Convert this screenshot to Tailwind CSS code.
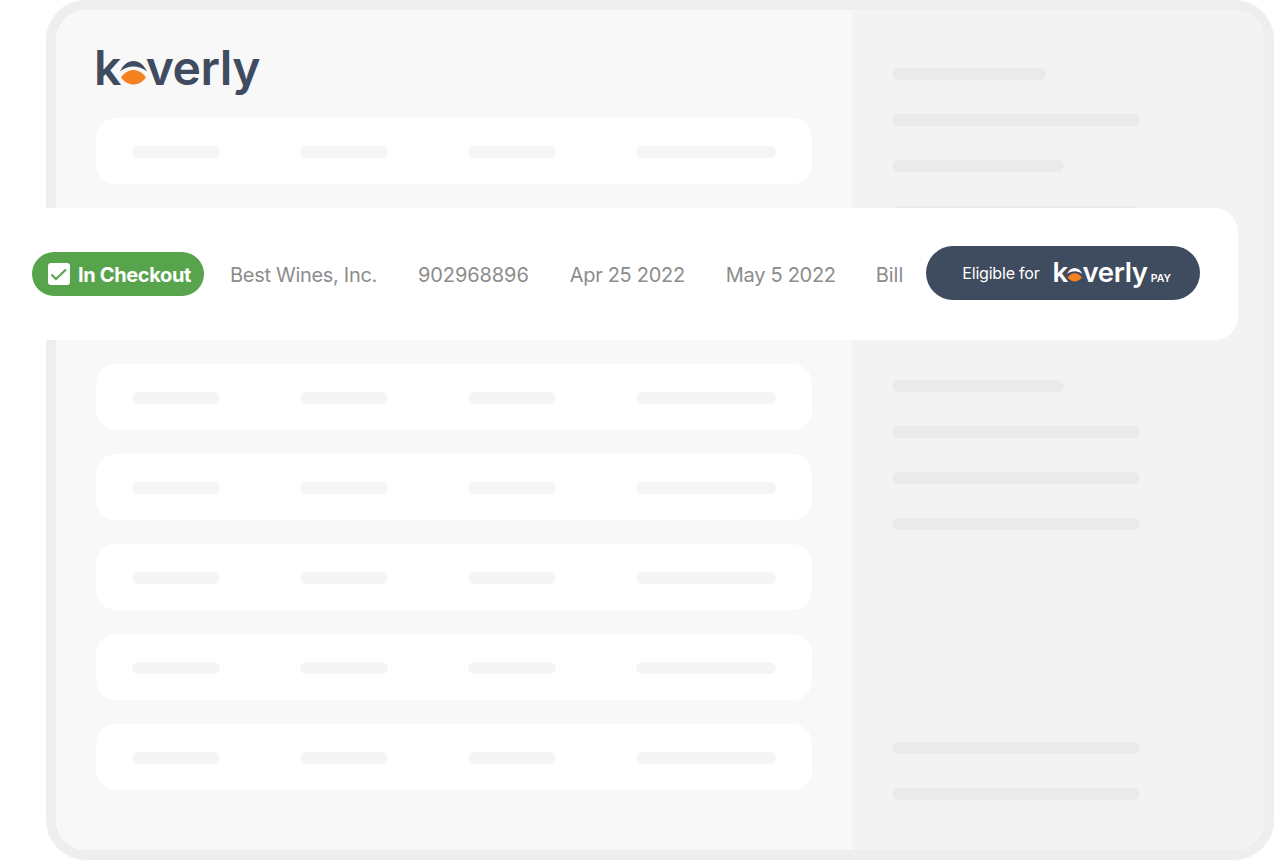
<!DOCTYPE html>
<html lang="en">

<head>
    <meta charset="UTF-8">
    <title>Koverly</title>
    <script src="https://cdn.jsdelivr.net/npm/@tailwindcss/browser@4"></script>
</head>

<body class="bg-white w-[1274px] h-[860px] overflow-hidden relative font-['Inter',sans-serif]">

    <!-- dashboard frame -->
    <div class="ml-[46px] w-[1228px] h-[860px] border-[10px] border-[#eeeeee] rounded-[40px] overflow-hidden flex">

        <!-- table side -->
        <div class="w-[796px] h-full bg-[#f8f8f8] px-10 pt-10">
            <div class="h-[44px] flex items-baseline ml-[-2px] mt-[-4px] mb-[28px] text-[#3f4b5e] text-[48px] leading-[44px] font-semibold tracking-[-0.5px]">
                <span>k</span>
                <svg class="w-[27px] h-[24px] mx-[-1px] shrink-0" viewBox="0 0 27 24">
                    <path d="M0 10.5C3 4 8 0 13.5 0C19 0 24 4 27 10.5C23 7 18 5.5 13.5 5.5C9 5.5 4 7 0 10.5Z" fill="#3f4b5e" />
                    <path d="M1 16.5C5 11 9 9 13.5 9C18 9 22 11 26 16.5C22 21.5 18 23.5 13.5 23.5C9 23.5 5 21.5 1 16.5Z" fill="#f58220" />
                </svg>
                <span>verly</span>
            </div>

            <div class="flex flex-col gap-6">
                <div class="h-[66px] w-[716px] rounded-[20px] bg-white flex items-center gap-20 px-9 pt-[2px]">
                    <div class="w-[88px] h-3 rounded-full bg-[#f5f5f5]"></div>
                    <div class="w-[88px] h-3 rounded-full bg-[#f5f5f5]"></div>
                    <div class="w-[88px] h-3 rounded-full bg-[#f5f5f5]"></div>
                    <div class="w-[140px] h-3 rounded-full bg-[#f5f5f5]"></div>
                </div>
                <div class="h-[66px] w-[716px] rounded-[20px] bg-white flex items-center gap-20 px-9 pt-[2px] mt-[156px]">
                    <div class="w-[88px] h-3 rounded-full bg-[#f5f5f5]"></div>
                    <div class="w-[88px] h-3 rounded-full bg-[#f5f5f5]"></div>
                    <div class="w-[88px] h-3 rounded-full bg-[#f5f5f5]"></div>
                    <div class="w-[140px] h-3 rounded-full bg-[#f5f5f5]"></div>
                </div>
                <div class="h-[66px] w-[716px] rounded-[20px] bg-white flex items-center gap-20 px-9 pt-[2px]">
                    <div class="w-[88px] h-3 rounded-full bg-[#f5f5f5]"></div>
                    <div class="w-[88px] h-3 rounded-full bg-[#f5f5f5]"></div>
                    <div class="w-[88px] h-3 rounded-full bg-[#f5f5f5]"></div>
                    <div class="w-[140px] h-3 rounded-full bg-[#f5f5f5]"></div>
                </div>
                <div class="h-[66px] w-[716px] rounded-[20px] bg-white flex items-center gap-20 px-9 pt-[2px]">
                    <div class="w-[88px] h-3 rounded-full bg-[#f5f5f5]"></div>
                    <div class="w-[88px] h-3 rounded-full bg-[#f5f5f5]"></div>
                    <div class="w-[88px] h-3 rounded-full bg-[#f5f5f5]"></div>
                    <div class="w-[140px] h-3 rounded-full bg-[#f5f5f5]"></div>
                </div>
                <div class="h-[66px] w-[716px] rounded-[20px] bg-white flex items-center gap-20 px-9 pt-[2px]">
                    <div class="w-[88px] h-3 rounded-full bg-[#f5f5f5]"></div>
                    <div class="w-[88px] h-3 rounded-full bg-[#f5f5f5]"></div>
                    <div class="w-[88px] h-3 rounded-full bg-[#f5f5f5]"></div>
                    <div class="w-[140px] h-3 rounded-full bg-[#f5f5f5]"></div>
                </div>
                <div class="h-[66px] w-[716px] rounded-[20px] bg-white flex items-center gap-20 px-9 pt-[2px]">
                    <div class="w-[88px] h-3 rounded-full bg-[#f5f5f5]"></div>
                    <div class="w-[88px] h-3 rounded-full bg-[#f5f5f5]"></div>
                    <div class="w-[88px] h-3 rounded-full bg-[#f5f5f5]"></div>
                    <div class="w-[140px] h-3 rounded-full bg-[#f5f5f5]"></div>
                </div>
            </div>
        </div>

        <!-- side panel -->
        <div class="flex-1 h-full bg-[#f3f3f3] pl-10 pt-[58px] flex flex-col">
            <div class="w-[154px] h-3 rounded-full bg-[#eaeaea]"></div>
            <div class="w-[248px] h-3 rounded-full bg-[#eaeaea] mt-[34px]"></div>
            <div class="w-[172px] h-3 rounded-full bg-[#eaeaea] mt-[34px]"></div>
            <div class="w-[248px] h-3 rounded-full bg-[#eaeaea] mt-[34px]"></div>
            <div class="w-[172px] h-3 rounded-full bg-[#eaeaea] mt-[162px]"></div>
            <div class="w-[248px] h-3 rounded-full bg-[#eaeaea] mt-[34px]"></div>
            <div class="w-[248px] h-3 rounded-full bg-[#eaeaea] mt-[34px]"></div>
            <div class="w-[248px] h-3 rounded-full bg-[#eaeaea] mt-[34px]"></div>
            <div class="w-[248px] h-3 rounded-full bg-[#eaeaea] mt-[212px]"></div>
            <div class="w-[248px] h-3 rounded-full bg-[#eaeaea] mt-[34px]"></div>
        </div>
    </div>

    <!-- highlighted row, lies over the frame -->
    <div class="absolute left-[46px] top-[208px] w-[1192px] h-[132px] bg-white rounded-r-[24px] flex items-center text-[20px] text-[#8c8c8c] tracking-[-0.3px]">
        <div class="ml-[-14px] w-[172px] h-[44px] rounded-full bg-[#58a44c] flex items-center pl-[16px] gap-[8px] text-white font-bold">
            <svg class="w-[22px] h-[22px]" viewBox="0 0 22 22">
                <rect x="0" y="0" width="22" height="22" rx="3" fill="#fff" />
                <path d="M3.5 11.5L8 16L18 6.5" fill="none" stroke="#58a44c" stroke-width="2.2" />
            </svg>
            <span class="mt-[2px] tracking-[-0.35px]">In Checkout</span>
        </div>
        <span class="ml-[26px] mt-[2px]">Best Wines, Inc.</span>
        <span class="ml-[41px] mt-[2px] tracking-[-0.1px]">902968896</span>
        <span class="ml-[41px] mt-[2px]">Apr 25 2022</span>
        <span class="ml-[41px] mt-[2px]">May 5 2022</span>
        <span class="ml-[40px] mt-[2px] tracking-[0px]">Bill</span>
        <div class="ml-[23px] mb-[2px] w-[274px] h-[54px] rounded-full bg-[#3f4b5e] flex items-center pl-[36px] text-white tracking-normal">
            <span class="text-[16px] tracking-[-0.2px]">Eligible for</span>
            <div class="ml-[13px] mb-[3px] flex items-baseline h-[26px] text-[27.5px] leading-[26px] font-semibold tracking-[-0.3px]">
                <span>k</span>
                <svg class="w-[15.5px] h-[13.8px] mx-[-0.5px] shrink-0" viewBox="0 0 27 24">
                    <path d="M0 10.5C3 4 8 0 13.5 0C19 0 24 4 27 10.5C23 7 18 5.5 13.5 5.5C9 5.5 4 7 0 10.5Z" fill="#fff" />
                    <path d="M1 16.5C5 11 9 9 13.5 9C18 9 22 11 26 16.5C22 21.5 18 23.5 13.5 23.5C9 23.5 5 21.5 1 16.5Z" fill="#f58220" />
                </svg>
                <span>verly</span>
            </div>
            <span class="ml-[3px] mt-[11px] text-[10.5px] font-semibold">PAY</span>
        </div>
    </div>

</body>

</html>
